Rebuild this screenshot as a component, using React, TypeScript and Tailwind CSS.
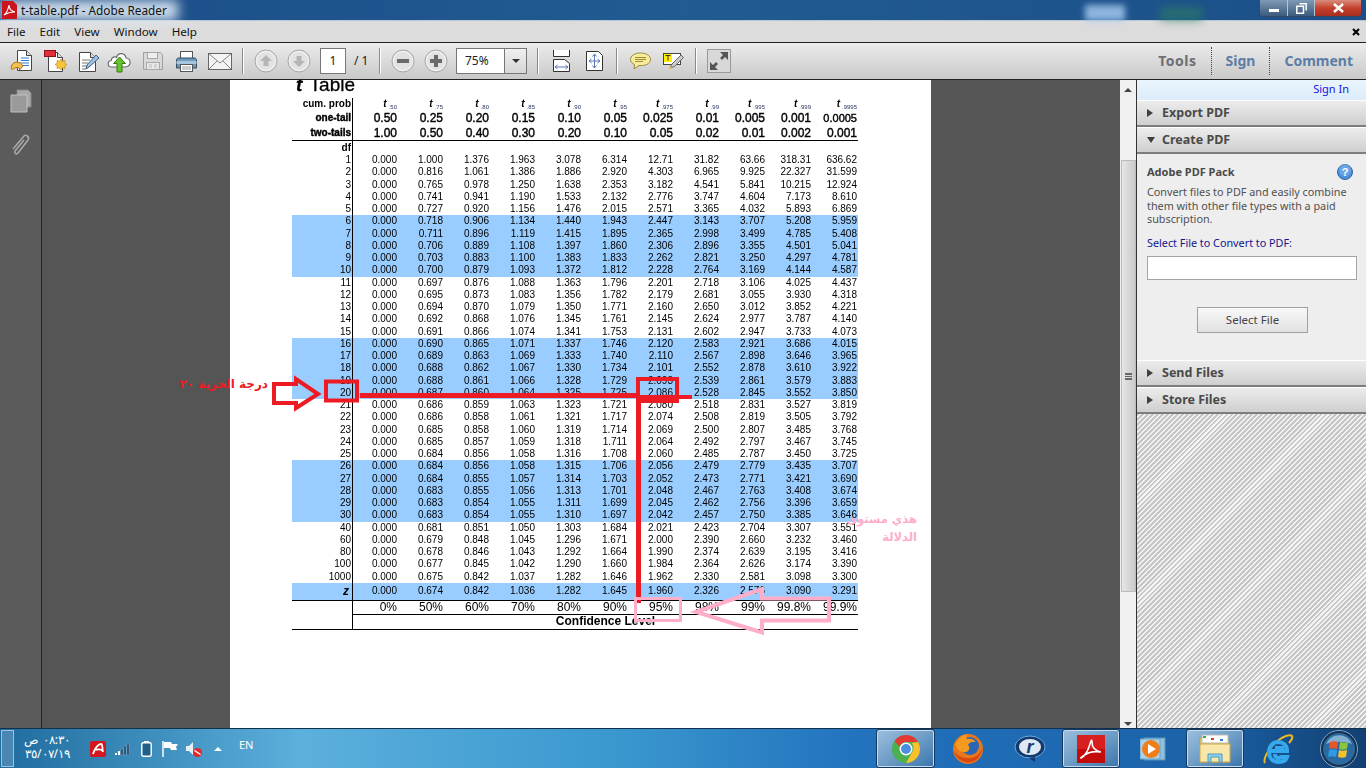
import type { ReactNode } from 'react';

const rows: string[] = [
  '1 0.000 1.000 1.376 1.963 3.078 6.314 12.71 31.82 63.66 318.31 636.62',
  '2 0.000 0.816 1.061 1.386 1.886 2.920 4.303 6.965 9.925 22.327 31.599',
  '3 0.000 0.765 0.978 1.250 1.638 2.353 3.182 4.541 5.841 10.215 12.924',
  '4 0.000 0.741 0.941 1.190 1.533 2.132 2.776 3.747 4.604 7.173 8.610',
  '5 0.000 0.727 0.920 1.156 1.476 2.015 2.571 3.365 4.032 5.893 6.869',
  '6 0.000 0.718 0.906 1.134 1.440 1.943 2.447 3.143 3.707 5.208 5.959',
  '7 0.000 0.711 0.896 1.119 1.415 1.895 2.365 2.998 3.499 4.785 5.408',
  '8 0.000 0.706 0.889 1.108 1.397 1.860 2.306 2.896 3.355 4.501 5.041',
  '9 0.000 0.703 0.883 1.100 1.383 1.833 2.262 2.821 3.250 4.297 4.781',
  '10 0.000 0.700 0.879 1.093 1.372 1.812 2.228 2.764 3.169 4.144 4.587',
  '11 0.000 0.697 0.876 1.088 1.363 1.796 2.201 2.718 3.106 4.025 4.437',
  '12 0.000 0.695 0.873 1.083 1.356 1.782 2.179 2.681 3.055 3.930 4.318',
  '13 0.000 0.694 0.870 1.079 1.350 1.771 2.160 2.650 3.012 3.852 4.221',
  '14 0.000 0.692 0.868 1.076 1.345 1.761 2.145 2.624 2.977 3.787 4.140',
  '15 0.000 0.691 0.866 1.074 1.341 1.753 2.131 2.602 2.947 3.733 4.073',
  '16 0.000 0.690 0.865 1.071 1.337 1.746 2.120 2.583 2.921 3.686 4.015',
  '17 0.000 0.689 0.863 1.069 1.333 1.740 2.110 2.567 2.898 3.646 3.965',
  '18 0.000 0.688 0.862 1.067 1.330 1.734 2.101 2.552 2.878 3.610 3.922',
  '19 0.000 0.688 0.861 1.066 1.328 1.729 2.093 2.539 2.861 3.579 3.883',
  '20 0.000 0.687 0.860 1.064 1.325 1.725 2.086 2.528 2.845 3.552 3.850',
  '21 0.000 0.686 0.859 1.063 1.323 1.721 2.080 2.518 2.831 3.527 3.819',
  '22 0.000 0.686 0.858 1.061 1.321 1.717 2.074 2.508 2.819 3.505 3.792',
  '23 0.000 0.685 0.858 1.060 1.319 1.714 2.069 2.500 2.807 3.485 3.768',
  '24 0.000 0.685 0.857 1.059 1.318 1.711 2.064 2.492 2.797 3.467 3.745',
  '25 0.000 0.684 0.856 1.058 1.316 1.708 2.060 2.485 2.787 3.450 3.725',
  '26 0.000 0.684 0.856 1.058 1.315 1.706 2.056 2.479 2.779 3.435 3.707',
  '27 0.000 0.684 0.855 1.057 1.314 1.703 2.052 2.473 2.771 3.421 3.690',
  '28 0.000 0.683 0.855 1.056 1.313 1.701 2.048 2.467 2.763 3.408 3.674',
  '29 0.000 0.683 0.854 1.055 1.311 1.699 2.045 2.462 2.756 3.396 3.659',
  '30 0.000 0.683 0.854 1.055 1.310 1.697 2.042 2.457 2.750 3.385 3.646',
  '40 0.000 0.681 0.851 1.050 1.303 1.684 2.021 2.423 2.704 3.307 3.551',
  '60 0.000 0.679 0.848 1.045 1.296 1.671 2.000 2.390 2.660 3.232 3.460',
  '80 0.000 0.678 0.846 1.043 1.292 1.664 1.990 2.374 2.639 3.195 3.416',
  '100 0.000 0.677 0.845 1.042 1.290 1.660 1.984 2.364 2.626 3.174 3.390',
  '1000 0.000 0.675 0.842 1.037 1.282 1.646 1.962 2.330 2.581 3.098 3.300',
];
const zRow = '0.000 0.674 0.842 1.036 1.282 1.645 1.960 2.326 2.576 3.090 3.291'.split(' ');
const probs = ['.50', '.75', '.80', '.85', '.90', '.95', '.975', '.99', '.995', '.999', '.9995'];
const oneTail = ['0.50', '0.25', '0.20', '0.15', '0.10', '0.05', '0.025', '0.01', '0.005', '0.001', '0.0005'];
const twoTails = ['1.00', '0.50', '0.40', '0.30', '0.20', '0.10', '0.05', '0.02', '0.01', '0.002', '0.001'];
const levels = ['0%', '50%', '60%', '70%', '80%', '90%', '95%', '98%', '99%', '99.8%', '99.9%'];

const isBlue = (i: number) => (i >= 5 && i < 10) || (i >= 15 && i < 20) || (i >= 25 && i < 30);

function Row({ label, cells, className }: { label: ReactNode; cells: ReactNode[]; className: string }) {
  return (
    <div className={`grid grid-cols-[61px_repeat(10,46px)_45px] leading-none ${className}`}>
      <div className="border-r border-black pr-[1px] text-right font-bold text-[10px] leading-none flex items-center justify-end">{label}</div>
      {cells.map((c, i) => (
        <div key={i} className="pr-[2px] last:pr-[1px] text-right flex items-center justify-end">{c}</div>
      ))}
    </div>
  );
}

function TTable() {
  return (
    <div className="w-[566px] ml-[62px] text-black [filter:blur(0.25px)]">
      <div className="h-[24px] -mt-[6px] text-[19px] leading-[22px] pl-[4px] [-webkit-text-stroke:0.3px_#000]">
        <b><i>t</i></b>&nbsp;<span className="ml-[2px]">Table</span>
      </div>
      <Row
        label="cum. prob"
        className="h-[12px] text-[10px]"
        cells={probs.map((p) => (
          <span key={p} className="font-bold italic text-[10px] leading-none">
            t<span className="text-[6px] not-italic font-normal text-[#1f2f5a] relative top-[2px] pl-[2px]">{p}</span>
          </span>
        ))}
      />
      <Row label="one-tail" className="h-[16px] text-[12px] [-webkit-text-stroke:0.4px_#000]" cells={oneTail.map((v) => (v === '0.0005' ? <span className="text-[11px]">{v}</span> : v))} />
      <Row label="two-tails" className="h-[15px] text-[12px] [-webkit-text-stroke:0.4px_#000] border-b border-black" cells={twoTails} />
      <Row label="df" className="h-[13px] text-[10px]" cells={probs.map(() => '')} />
      {rows.map((r, i) => {
        const [df, ...vals] = r.split(' ');
        return (
          <Row
            key={df}
            label={<span className="font-normal">{df}</span>}
            className={`h-[12.25px] text-[10px] ${isBlue(i) ? 'bg-[#99ccff]' : ''}`}
            cells={vals}
          />
        );
      })}
      <Row label={<span className="text-[12px] italic pr-[2px]">z</span>} className="h-[18px] text-[10px] bg-[#99ccff] border-b border-black" cells={zRow} />
      <Row label="" className="h-[13px] text-[12px]" cells={levels} />
      <div className="flex h-[16px] border-b border-black">
        <div className="w-[61px] border-r border-black" />
        <div className="flex-1 border-t border-black text-center font-bold text-[12px] leading-[13px]">Confidence Level</div>
      </div>
    </div>
  );
}

/* toolbar icons */
const OpenIcon = () => (
  <svg width="24" height="24" viewBox="0 0 24 24">
    <path d="M7.5 1.5h9l5 5v15h-14z" fill="#fff" stroke="#444" />
    <path d="M16.5 1.5v5h5" fill="#ddd" stroke="#444" />
    <path d="M11 9h8M11 11.5h8M11 14h8M13 16.5h6" stroke="#2f7fd6" />
    <path d="M1.5 13c1-4 6-4.500 8-3v-1l3.500 4-3.500 4v-2c-3-1-5-.5-6 1-1.500 1.500-3 0-2-3z" transform="translate(0 4)" fill="#f2c14e" stroke="#a9721a" />
  </svg>
);
const CreateIcon = () => (
  <svg width="24" height="24" viewBox="0 0 24 24">
    <path d="M4.500 3.500h9l5 5v14h-14z" fill="#fff" stroke="#444" />
    <path d="M13.500 3.500v5h5" fill="#ddd" stroke="#444" />
    <rect x="0.500" y="1.500" width="11" height="6" fill="#e0313a" stroke="#8c1218" />
    <path d="M17 10l1.500 2.300 2.500-.8-.2 2.700 2.200 1.300-2.200 1.300.2 2.700-2.500-.8L17 21l-1.500-2.300-2.500.8.200-2.700-2.200-1.300 2.200-1.300-.2-2.700 2.500.8z" fill="#f7c63c" stroke="#b98318" strokeWidth=".6" />
  </svg>
);
const EditIcon = () => (
  <svg width="24" height="24" viewBox="0 0 24 24">
    <path d="M2.500 3.500h11l5 5v14h-16z" fill="#fff" stroke="#444" />
    <path d="M13.500 3.500v5h5" fill="#ddd" stroke="#444" />
    <path d="M5 11h8M5 14h6M5 17h5M5 20h4" stroke="#777" />
    <path d="M9 20l1-4 9-10 3 3-10 9z" fill="#9cc3e6" stroke="#3d5f80" />
  </svg>
);
const CloudIcon = () => (
  <svg width="25" height="24" viewBox="0 0 25 24">
    <path d="M5 18c-5 0-5-6-.8-6.500C4.500 8 8 7 9.500 8.500 11 3 18 3.500 19 9c5 .5 6 8-.5 9z" fill="#fff" stroke="#666" strokeWidth="1.100" />
    <path d="M12.500 8l6 6.500h-3.500V23h-5v-8.500H6.500z" fill="#68c22e" stroke="#2e7a12" />
  </svg>
);
const SaveIcon = () => (
  <svg width="22" height="24" viewBox="0 0 22 24">
    <path d="M1.500 3.500h17l2 2v15h-19z" fill="#d9d9d9" stroke="#a0a0a0" />
    <rect x="5.500" y="3.500" width="10" height="6" fill="#eee" stroke="#a8a8a8" />
    <rect x="4.500" y="13.500" width="13" height="7" fill="#e8e8e8" stroke="#a8a8a8" />
    <path d="M7 16h3M12 16h3M7 18h3M12 18h3" stroke="#bbb" />
  </svg>
);
const PrintIcon = () => (
  <svg width="23" height="24" viewBox="0 0 23 24">
    <rect x="5.500" y="2.500" width="12" height="8" fill="#fff" stroke="#555" />
    <path d="M1.500 11c0-1 1-2 2-2h16c1 0 2 1 2 2v8h-20z" fill="#6f9abb" stroke="#33495e" />
    <rect x="1.500" y="12" width="20" height="3" fill="#a7c5db" />
    <rect x="5.500" y="15.500" width="12" height="7" fill="#fff" stroke="#555" />
    <path d="M7 18h9M7 20h9" stroke="#999" />
  </svg>
);
const MailIcon = () => (
  <svg width="24" height="24" viewBox="0 0 24 24">
    <rect x="0.500" y="4.500" width="23" height="16" fill="#f4f4f4" stroke="#666" />
    <path d="M1 5l11 9 11-9M1 20l8-8M23 20l-8-8" fill="none" stroke="#888" />
  </svg>
);
const RoundBtn = ({ children }: { children: ReactNode }) => (
  <svg width="24" height="24" viewBox="0 0 24 24">
    <circle cx="12" cy="12" r="11" fill="#e2e2e2" stroke="#a8a8a8" />
    <circle cx="12" cy="12" r="9.500" fill="none" stroke="#f5f5f5" />
    {children}
  </svg>
);
const Sep = ({ className }: { className: string }) => <div className={`w-[2px] h-[26px] bg-[#8a8a8a] border-r border-white ${className}`} />;

const FitWidth = () => (
  <svg width="17" height="22" viewBox="0 0 17 22">
    <path d="M.500 0v6.500h16V0" fill="#fff" stroke="#333" />
    <path d="M.500 21.500v-12h11l5 4v8z" fill="#fff" stroke="#333" />
    <path d="M2 17h13M2 17l2.500-2M2 17l2.500 2M15 17l-2.500-2M15 17l-2.500 2" fill="none" stroke="#5b78b8" />
  </svg>
);
const FitPage = () => (
  <svg width="17" height="20" viewBox="0 0 17 20">
    <path d="M.500 .500h12l4 4v15h-16z" fill="#fff" stroke="#333" />
    <path d="M8.500 3v14M3 10h11M8.500 3L6.500 5.500M8.500 3l2 2.500M8.500 17l-2-2.500M8.500 17l2-2.500M3 10l2.500-2M3 10l2.500 2M14 10l-2.500-2M14 10l-2.500 2" fill="none" stroke="#5b78b8" />
  </svg>
);
const CommentIcon = () => (
  <svg width="21" height="18" viewBox="0 0 21 18">
    <path d="M10.500 1C5 1 .5 3.500 .5 7.500c0 2.500 2 4 4 5L4 17l5-3.500c6 .5 11.500-1.500 11.500-6C20.500 3.500 16 1 10.500 1z" fill="#f7ec9c" stroke="#9a8a3a" />
    <path d="M5 5.500h11M5 7.500h11M5 9.500h8" stroke="#a08a30" />
  </svg>
);
const NoteIcon = () => (
  <svg width="21" height="18" viewBox="0 0 21 18">
    <rect x="0.500" y="1.500" width="17" height="11" fill="#fff" stroke="#444" />
    <rect x="1" y="2" width="8" height="8" fill="#ffee00" />
    <path d="M2.500 3.500h5M5 3.500v5" stroke="#333" />
    <path d="M7 16l2-4 9-9 2.500 2.500-9 9z" fill="#c9c9c9" stroke="#666" />
    <path d="M6 17.500l3-1.500-1.500-1.500z" fill="#e8c63c" />
  </svg>
);
const ExpandIcon = () => (
  <div className="w-[24px] h-[24px] border border-[#999] bg-[#d8d8d8] flex items-center justify-center">
    <svg width="20" height="20" viewBox="0 0 20 20">
      <path d="M11 1h8v8l-3-3-3 3-2-2 3-3zM9 19H1v-8l3 3 3-3 2 2-3 3z" fill="#555" />
    </svg>
  </div>
);

const PanelHead = ({ title, open, className }: { title: string; open?: boolean; className: string }) => (
  <div className={`flex items-center bg-gradient-to-b from-[#ececec] to-[#cfcfcf] border-b-2 border-[#7d7d7d] border-t border-t-white pl-[10px] ${className}`}>
    <span className={`w-0 h-0 ${open ? 'border-l-[4px] border-r-[4px] border-t-[6px] border-x-transparent border-t-[#3e3e3e] mr-[7px]' : 'border-t-[4px] border-b-[4px] border-l-[6px] border-y-transparent border-l-[#3e3e3e] mr-[9px]'}`} />
    <span className="font-bold text-[12.5px] text-[#4a4a4a]">{title}</span>
  </div>
);

function SidePanel() {
  return (
    <div className="w-[230px] flex flex-col border-l border-[#333] font-['Noto_Sans',sans-serif]">
      <div className="h-[20px] shrink-0 bg-gradient-to-b from-[#eaf4fd] to-[#dcecfa] text-right pr-[17px] text-[11px] leading-[18px] text-[#1414e0]">Sign In</div>
      <PanelHead title="Export PDF" className="h-[27px] shrink-0" />
      <PanelHead title="Create PDF" open className="h-[27px] shrink-0" />
      <div className="h-[206px] shrink-0 bg-[#eeeeee] px-[10px] pt-[10px]">
        <div className="flex justify-between items-center h-[16px] pr-[3px]">
          <span className="font-bold text-[11px] text-[#4a4a4a]">Adobe PDF Pack</span>
          <svg width="16" height="16" viewBox="0 0 16 16">
            <circle cx="8" cy="8" r="7.500" fill="#4f8fd8" stroke="#2d65a8" />
            <circle cx="8" cy="6" r="6" fill="#7db2ea" opacity=".6" />
            <text x="8" y="12" textAnchor="middle" fontSize="11" fontWeight="700" fill="#fff" fontFamily="Liberation Sans">?</text>
          </svg>
        </div>
        <p className="mt-[5px] text-[10.8px] leading-[13.5px] text-[#505050] w-[214px]">
          Convert files to PDF and easily combine them with other file types with a paid subscription.
        </p>
        <div className="mt-[10px] text-[10.8px] leading-[14px] text-[#14148c]">Select File to Convert to PDF:</div>
        <div className="mt-[6px] h-[24px] w-[210px] bg-white border border-[#a5a5a5]" />
        <button className="block mt-[27px] ml-[50px] h-[26px] w-[111px] bg-gradient-to-b from-[#f8f8f8] to-[#e2e2e2] border border-[#a0a0a0] text-[11.5px] text-[#444]">
          Select File
        </button>
      </div>
      <PanelHead title="Send Files" className="h-[27px] shrink-0" />
      <PanelHead title="Store Files" className="h-[27px] shrink-0" />
      <div className="flex-1 bg-[repeating-linear-gradient(135deg,#c6c6c6_0px,#c6c6c6_2px,#f4f4f4_2px,#f4f4f4_3.5px)]" />
    </div>
  );
}

/* taskbar icons */
const Chrome = () => (
  <svg width="30" height="30" viewBox="0 0 30 30">
    <circle cx="15" cy="15" r="14" fill="#4caf50" />
    <path d="M15 1a14 14 0 0 1 12.100 7H15a7 7 0 0 0-6.600 4.500L3.500 7A14 14 0 0 1 15 1z" fill="#e53935" />
    <path d="M27.100 8A14 14 0 0 1 15 29l6-10.500A7 7 0 0 0 20.500 9z" fill="#fbc02d" />
    <circle cx="15" cy="15" r="6.500" fill="#fff" />
    <circle cx="15" cy="15" r="5" fill="#4a8fe0" />
  </svg>
);
const Firefox = () => (
  <svg width="32" height="32" viewBox="0 0 32 32">
    <circle cx="16" cy="16" r="15" fill="#e8761a" />
    <circle cx="18" cy="13" r="9" fill="#2b66b5" />
    <path d="M3 12C5 6 10 2 16 1c-2 2-2 4-1 5 3-1 7 0 9 3-3-1-7 0-8 3 3 3 1 8-5 7-3 0-6-3-7-6z" fill="#f39a1f" />
    <path d="M2 18c2 8 10 13 18 11 6-2 10-8 10-14-2 7-8 11-15 10-6 0-10-3-13-7z" fill="#d9480f" />
  </svg>
);
const RealPlayer = () => (
  <svg width="32" height="28" viewBox="0 0 32 28">
    <ellipse cx="16" cy="12" rx="15" ry="11" fill="#123a6e" stroke="#6ea8e0" />
    <path d="M15 23l6 4 0-5z" fill="#123a6e" />
    <ellipse cx="16" cy="12" rx="11" ry="8" fill="#dfe9f4" />
    <text x="16" y="18" textAnchor="middle" fontSize="18" fontWeight="700" fontStyle="italic" fill="#123a6e" fontFamily="Liberation Sans">r</text>
  </svg>
);
const Acrobat = () => (
  <svg width="28" height="28" viewBox="0 0 28 28">
    <rect width="28" height="28" fill="#c40b0b" />
    <rect width="28" height="14" fill="#d81f1f" />
    <path d="M4 23c4-2 7-7 9-14 1-4 2-5 2-2 0 5 3 9 9 10-6-1-13 0-18 4-2 2-3 2-2 2z" fill="none" stroke="#fff" strokeWidth="1.600" />
  </svg>
);
const MediaPlayer = () => (
  <svg width="26" height="24" viewBox="0 0 26 24">
    <rect x="4" y="1" width="21" height="22" fill="#8fc0e0" stroke="#5d94bb" />
    <rect x="0" y="2" width="20" height="20" fill="#a9d2ea" stroke="#6aa2c8" />
    <circle cx="11" cy="12" r="9" fill="#ef7d1a" />
    <path d="M8 7l8 5-8 5z" fill="#fff" />
  </svg>
);
const Folder = () => (
  <svg width="32" height="30" viewBox="0 0 32 30">
    <path d="M1 4h12l2 3h15v21H1z" fill="#e9cf7e" stroke="#b89a45" />
    <rect x="3" y="1" width="26" height="8" fill="#fff" stroke="#bbb" />
    <rect x="4" y="2" width="3" height="2" fill="#2bb24c" />
    <rect x="12" y="4" width="3" height="2" fill="#d33a2a" />
    <rect x="21" y="5" width="3" height="2" fill="#2d7fd6" />
    <path d="M1 10h30v18H1z" fill="#f8e7a8" stroke="#c9a94f" />
    <path d="M9 28v-8h14v8h-3v-5h-8v5z" fill="#8fd0ec" stroke="#4a9cc0" />
  </svg>
);
const IE = () => (
  <svg width="32" height="32" viewBox="0 0 32 32">
    <path d="M3 30C1 27 5 17 14 9 21 3 28 1 30 3c1 2-1 5-3 7" fill="none" stroke="#e8b923" strokeWidth="2" />
    <path d="M7 18h18c0-6-4-9-9-9s-9 4-9 10 4 10 10 10c4 0 7-2 8-5h-6c-2 2-6 1-6-3m0-6h9" fill="none" stroke="#35a8ee" strokeWidth="4" />
  </svg>
);
const StartOrb = () => (
  <svg width="38" height="38" viewBox="0 0 38 38">
    <circle cx="19" cy="19" r="18.500" fill="#16304f" stroke="#7aa6c8" />
    <circle cx="19" cy="19" r="16" fill="#2a6aa0" />
    <path d="M6 14a14 14 0 0 1 26 0c-8-3-18-3-26 0z" fill="#a8cfe6" opacity=".7" />
    <path d="M10 12c3-1 6-1 8 0l-1 7c-3-1-5-1-8 0z" fill="#e8562c" />
    <path d="M20 12c3 1 5 1 8 0l-1 7c-3 1-5 1-8 0z" fill="#8bc53f" />
    <path d="M9 20c3-1 5-1 8 0l-1 7c-3-1-5-1-8 0z" fill="#2f9be6" />
    <path d="M19 20c3 1 5 1 8 0l-1 7c-3 1-5 1-8 0z" fill="#f6c22a" />
  </svg>
);
const TaskBtn = ({ children, className = '' }: { children: ReactNode; className?: string }) => (
  <div className={`h-[39px] shrink-0 flex items-center justify-center rounded-[3px] ${className}`}>{children}</div>
);
const activeBtn = 'border border-[#16375e] bg-gradient-to-br from-[#9cc0de] via-[#6f9dc6] to-[#3a75ad] shadow-[inset_0_0_0_1px_#c6dcef]';

function Taskbar() {
  return (
    <div className="h-[40px] shrink-0 flex items-center justify-between bg-[linear-gradient(90deg,#1f6c9e_0%,#5cb0dc_22%,#3a98cf_45%,#2272bd_63%,#1b62a8_88%,#123f70_100%)] border-t border-[#12304c] font-['Noto_Sans',sans-serif]">
      <div className="flex items-center text-white h-full">
        <div className="ml-[1px] w-[13px] h-[37px] bg-[#4a86b2] border border-[#9cc3db]" />
        <div className="ml-[10px] w-[46px] text-[12px] leading-[14px] -mt-[3px]" dir="ltr">
          <div className="flex justify-end gap-[4px]"><span>ص</span><span>٠٨:٣٠</span></div>
          <div className="text-right">٣٥/٠٧/١٩</div>
        </div>
        <svg className="ml-[20px]" width="16" height="16" viewBox="0 0 16 16">
          <rect width="16" height="16" rx="2" fill="#d4161e" />
          <path d="M3 13C5 6 9 3 11 3c2 0 1 5 2 8M5 9c3-1 6-1 8 1" fill="none" stroke="#fff" strokeWidth="1.800" />
        </svg>
        <svg className="ml-[8px]" width="16" height="14" viewBox="0 0 16 14">
          <path d="M1 11h2v2H1zM4 9h2v4H4z" fill="#fff" />
          <path d="M7 7h2v6H7zM10 4h2v9h-2zM13 2h2v11h-2z" fill="#1b3f5c" stroke="#9cc3db" strokeWidth=".4" />
        </svg>
        <svg className="ml-[11px]" width="11" height="16" viewBox="0 0 11 16">
          <rect x="3" y="0" width="5" height="2" fill="#fff" />
          <rect x=".8" y="1.800" width="9.400" height="13.400" rx="1.500" fill="#1f5f88" stroke="#fff" strokeWidth="1.400" />
        </svg>
        <svg className="ml-[10px]" width="16" height="16" viewBox="0 0 16 16">
          <path d="M1 0v16" stroke="#fff" strokeWidth="1.500" />
          <path d="M2 1h7l1 2h6l-2 3 1 3h-6l-1-2H2z" fill="#fff" />
        </svg>
        <svg className="ml-[8px]" width="16" height="16" viewBox="0 0 16 16">
          <path d="M0 5h3l4-4v13l-4-4H0z" fill="#e8eef2" />
          <circle cx="11.500" cy="11.500" r="4.500" fill="#e8242b" />
          <path d="M8.500 9.500l6 4" stroke="#fff" strokeWidth="1.500" />
        </svg>
        <span className="ml-[12px] w-0 h-0 border-l-[4px] border-r-[4px] border-b-[4px] border-x-transparent border-b-white" />
        <span className="ml-[17px] text-[11px] -mt-[6px]">EN</span>
      </div>
      <div className="flex items-center h-full pr-[8px]">
        <TaskBtn className={`w-[59px] ${activeBtn}`}><Chrome /></TaskBtn>
        <TaskBtn className="w-[59px] ml-[3px]"><Firefox /></TaskBtn>
        <TaskBtn className="w-[59px] ml-[3px]"><RealPlayer /></TaskBtn>
        <TaskBtn className={`w-[58px] ml-[3px] ${activeBtn}`}><Acrobat /></TaskBtn>
        <TaskBtn className="w-[59px] ml-[3px]"><MediaPlayer /></TaskBtn>
        <TaskBtn className={`w-[58px] ml-[4px] ${activeBtn}`}><Folder /></TaskBtn>
        <TaskBtn className="w-[59px] ml-[4px]"><IE /></TaskBtn>
        <TaskBtn className="w-[38px] ml-[13px]"><StartOrb /></TaskBtn>
      </div>
    </div>
  );
}

export default function App() {
  return (
    <div className="relative w-[1366px] h-[768px] overflow-hidden flex flex-col font-['Liberation_Sans',sans-serif]">
      {/* title bar */}
      <div className="relative h-[21px] shrink-0 flex justify-between bg-gradient-to-r from-[#1c4d88] via-[#215b92] to-[#1c4f88] border-b border-[#b8c6d6] font-['Noto_Sans',sans-serif]">
        <div className="absolute left-0 top-0 w-[178px] h-[21px] bg-[#dfe9f3] blur-[6px] opacity-90" />
        <div className="absolute left-[1085px] top-[5px] w-[40px] h-[16px] bg-[#a9cdf2] blur-[3px] opacity-80" />
        <div className="absolute left-[1160px] top-[7px] w-[42px] h-[14px] bg-[#2c7f60] blur-[4px] opacity-60" />
        <div className="relative flex items-center pl-[2px]">
          <svg width="15" height="18" viewBox="0 0 15 18">
            <path d="M0 0h11l4 4v14H0z" fill="#c8161c" />
            <path d="M2 14c3-2 4-5 5-10 0 4 2 6 6 7-4 0-8 1-11 3z" fill="none" stroke="#fff" strokeWidth="1.100" />
          </svg>
          <span className="ml-[4px] mt-[2px] text-[11.8px] text-[#111]">t-table.pdf - Adobe Reader</span>
        </div>
        <div className="relative flex h-[17px] mr-[4px] rounded-b-[4px] overflow-hidden border border-t-0 border-[#324a63]">
          <div className="w-[28px] flex items-center justify-center bg-gradient-to-b from-[#7f9ab5] to-[#3d5b7c] border-r border-[#b5c4d3]">
            <div className="w-[10px] h-[3px] bg-white mt-[4px]" />
          </div>
          <div className="w-[27px] flex items-center justify-center bg-gradient-to-b from-[#7f9ab5] to-[#3d5b7c] border-r border-[#b5c4d3]">
            <svg width="11" height="11" viewBox="0 0 11 11"><path d="M3.500 .8h6.700v6.700M.8 3.200h6.700v7H.8z" fill="none" stroke="#fff" strokeWidth="1.500" /></svg>
          </div>
          <div className="w-[46px] flex items-center justify-center bg-gradient-to-b from-[#d98a7c] via-[#c5402c] to-[#a82d20]">
            <svg width="11" height="10" viewBox="0 0 11 10"><path d="M1 1l9 8M10 1l-9 8" stroke="#fff" strokeWidth="2.600" /></svg>
          </div>
        </div>
      </div>

      {/* menu bar */}
      <div className="h-[21px] shrink-0 flex items-center justify-between bg-[#dcdcdc] pl-[7px] pr-[6px] text-[11.6px] text-[#111] font-['Noto_Sans',sans-serif]">
        <div className="flex gap-[14px] mt-[1px]">
          <span>File</span><span>Edit</span><span>View</span><span>Window</span><span>Help</span>
        </div>
        <svg width="8" height="8" viewBox="0 0 8 8"><path d="M1 1l6 6M7 1l-6 6" stroke="#000" strokeWidth="2" /></svg>
      </div>

      {/* toolbar */}
      <div className="h-[38px] shrink-0 flex items-center border-y border-[#222] bg-gradient-to-b from-[#ececec] to-[#c9c9c9] pl-[10px] font-['Noto_Sans',sans-serif]">
        <OpenIcon />
        <div className="ml-[10px]"><CreateIcon /></div>
        <div className="ml-[9px]"><EditIcon /></div>
        <div className="ml-[6px]"><CloudIcon /></div>
        <div className="ml-[10px]"><SaveIcon /></div>
        <div className="ml-[11px]"><PrintIcon /></div>
        <div className="ml-[10px]"><MailIcon /></div>
        <Sep className="ml-[10px]" />
        <div className="ml-[10px]"><RoundBtn><path d="M12 6l6 6h-3.500v5h-5v-5H6z" fill="#b5b5b5" /></RoundBtn></div>
        <div className="ml-[9px]"><RoundBtn><path d="M12 18l-6-6h3.500V7h5v5H18z" fill="#b5b5b5" /></RoundBtn></div>
        <div className="ml-[9px] w-[26px] h-[26px] bg-white border border-[#777] text-center text-[12px] leading-[24px] text-[#222]">1</div>
        <span className="ml-[8px] w-[17px] text-[12px] text-[#222]">/ 1</span>
        <Sep className="ml-[8px]" />
        <div className="ml-[10px]"><RoundBtn><rect x="6" y="10" width="12" height="4" fill="#6a6a6a" /></RoundBtn></div>
        <div className="ml-[9px]"><RoundBtn><path d="M10 6h4v4h4v4h-4v4h-4v-4H6v-4h4z" fill="#6a6a6a" /></RoundBtn></div>
        <div className="ml-[8px] w-[71px] h-[26px] flex bg-white border border-[#777] text-[12px] text-[#222]">
          <span className="flex-1 leading-[24px] pl-[8px]">75%</span>
          <span className="w-[22px] flex items-center justify-center border-l border-[#777] bg-gradient-to-b from-[#f0f0f0] to-[#d6d6d6]">
            <span className="w-0 h-0 border-l-[4px] border-r-[4px] border-t-[4px] border-x-transparent border-t-[#333]" />
          </span>
        </div>
        <Sep className="ml-[10px]" />
        <div className="ml-[14px] flex"><FitWidth /></div>
        <div className="ml-[16px] flex"><FitPage /></div>
        <Sep className="ml-[13px]" />
        <div className="ml-[12px] flex"><CommentIcon /></div>
        <div className="ml-[12px] flex"><NoteIcon /></div>
        <Sep className="ml-[11px]" />
        <div className="ml-[10px]"><ExpandIcon /></div>
        <div className="ml-auto flex items-center h-full pr-[13px] font-bold text-[14px]">
          <span className="text-[#6e6e74] tracking-[0.5px] -mt-[2px]">Tools</span>
          <div className="h-[28px] ml-[14px] mr-[14px] border-l border-dotted border-[#444]" />
          <span className="text-[#5b7da6] -mt-[2px]">Sign</span>
          <div className="h-[28px] ml-[14px] mr-[14px] border-l border-dotted border-[#444]" />
          <span className="text-[#5b7da6] -mt-[2px]">Comment</span>
        </div>
      </div>

      {/* main area */}
      <div className="flex-1 min-h-0 flex">
        <div className="w-[42px] shrink-0 bg-[#5b5b5b] border-r border-[#222] flex flex-col items-center pt-[9px] gap-[20px]">
          <svg width="22" height="24" viewBox="0 0 22 24">
            <path d="M7 1h11l3 3v14H7z" fill="#a9a9a9" stroke="#888" />
            <path d="M1 6h13l3 0v17H1z" fill="#9a9a9a" stroke="#c0c0c0" />
          </svg>
          <svg width="22" height="24" viewBox="0 0 22 24">
            <path d="M3 16L14 3c2-2 6 1 4 4L8 20c-2 2-4 0-3-2L14 7" fill="none" stroke="#a9a9a9" strokeWidth="1.600" />
          </svg>
        </div>
        <div className="w-[188px] shrink-0 bg-[#555555]" />
        <div className="w-[701px] shrink-0 bg-white overflow-hidden"><TTable /></div>
        <div className="flex-1 bg-[#555555]" />
        <div className="w-[16px] shrink-0 flex flex-col items-center bg-[#f0f0f0]">
          <span className="mt-[8px] w-0 h-0 border-l-[4px] border-r-[4px] border-b-[4px] border-x-transparent border-b-[#444]" />
          <div className="mt-[68px] w-[15px] h-[432px] bg-gradient-to-r from-[#e6e6e6] to-[#c9c9c9] border border-[#bbb] flex items-center justify-center">
            <div className="w-[7px] h-[7px] border-y border-[#666] bg-[linear-gradient(#666_1px,transparent_1px)] bg-[length:100%_2px]" />
          </div>
          <span className="mt-auto mb-[2px] w-0 h-0 border-l-[4px] border-r-[4px] border-t-[4px] border-x-transparent border-t-[#444]" />
        </div>
        <SidePanel />
      </div>

      <Taskbar />

      {/* hand drawn annotations pasted over the page */}
      <svg className="absolute inset-0 pointer-events-none" width="1366" height="768" viewBox="0 0 1366 768" fill="none">
        <path d="M274 384h22v-5l22 15-22 14v-5h-22z" stroke="#ed1c24" strokeWidth="4" />
        <rect x="326" y="381.500" width="31" height="19" stroke="#ed1c24" strokeWidth="4" />
        <path d="M360 395.500h280" stroke="#ed1c24" strokeWidth="5" />
        <path d="M640 397h52" stroke="#ed1c24" strokeWidth="4" />
        <rect x="638" y="379" width="39" height="22" stroke="#ed1c24" strokeWidth="4" />
        <path d="M638.500 402v201" stroke="#ed1c24" strokeWidth="5" />
        <rect x="635.500" y="598.500" width="45" height="22" stroke="#ffaec9" strokeWidth="3" />
        <path d="M696 612l66-23v9.500h67v22h-67v12z" stroke="#ffaec9" strokeWidth="4" />
      </svg>
      <div dir="rtl" className="absolute left-[170px] top-[375px] w-[98px] text-right text-[12px] font-bold text-[#ed1c24] font-['DejaVu_Sans',sans-serif]">درجة الحرية ٢٠</div>
      <div dir="rtl" className="absolute left-[840px] top-[510px] w-[77px] text-right text-[11.5px] leading-[18px] font-bold text-[#ffaec9] font-['DejaVu_Sans',sans-serif]">
        <div className="whitespace-nowrap">هذي مستوى</div>
        <div>الدلالة</div>
      </div>
    </div>
  );
}
